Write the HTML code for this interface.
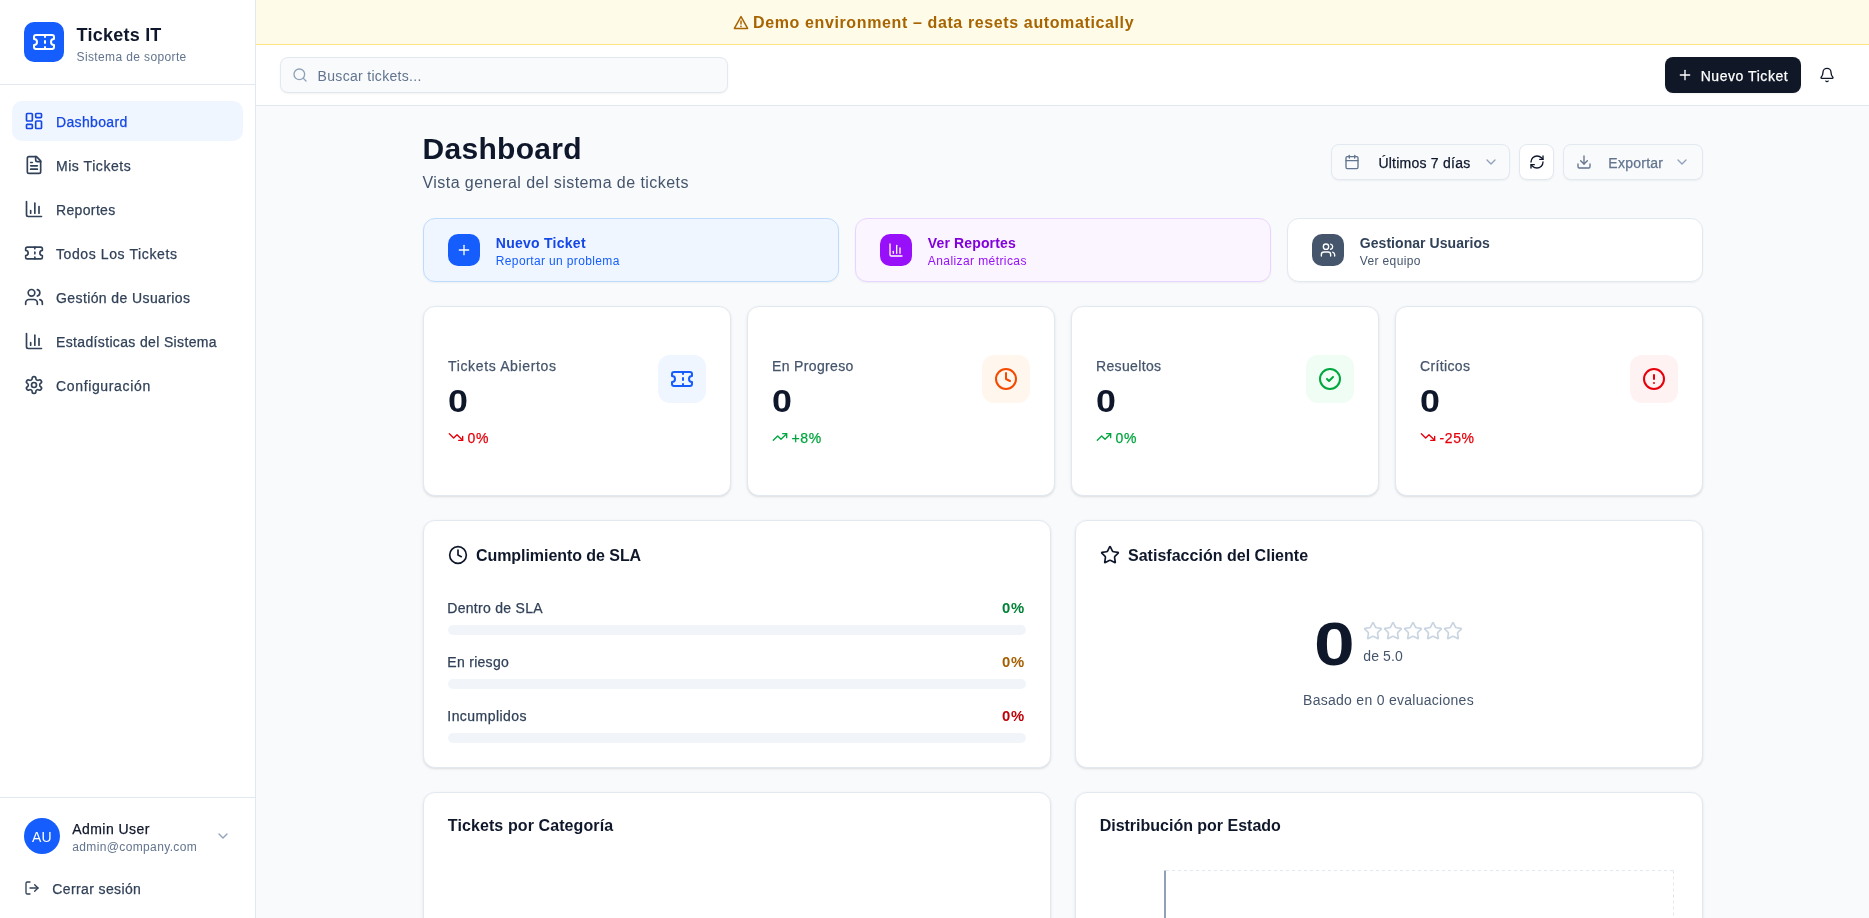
<!DOCTYPE html>
<html><head><meta charset="utf-8"><title>Dashboard</title>
<style>
html,body{margin:0;padding:0;}
body{width:1869px;height:918px;overflow:hidden;position:relative;background:#f8fafc;font-family:"Liberation Sans",sans-serif;}
#root{position:absolute;left:0;top:0;width:1869px;height:918px;will-change:transform;}
.a{position:absolute;box-sizing:border-box;}
.t{position:absolute;white-space:nowrap;line-height:1;}
svg.a{overflow:visible;}
</style></head><body>
<div id="root">
<div class="a" style="left:0px;top:0px;width:1869px;height:45px;background:#fefbe8;border-bottom:1px solid #fee685;"></div>
<svg class="a" style="left:733px;top:15px" width="16" height="15" viewBox="0 0 16 15"><path d="M8 1.6 L14.6 13.4 H1.4 Z" fill="none" stroke="#a86400" stroke-width="1.5" stroke-linejoin="round"/><path d="M8 5.4 V9.4" stroke="#a86400" stroke-width="1.5"/><circle cx="8" cy="11.3" r="0.85" fill="#a86400"/></svg>
<div class="t" style="left:753.0px;top:15.06px;font-size:16px;color:#a86400;font-weight:700;letter-spacing:0.62px;">Demo environment – data resets automatically</div>
<div class="a" style="left:0px;top:0px;width:256px;height:918px;background:#ffffff;border-right:1px solid #e2e8f0;"></div>
<div class="a" style="left:24px;top:22px;width:40px;height:40px;background:#155dfc;border-radius:10px;"></div>
<svg class="a" style="left:32px;top:30px" width="24" height="24" viewBox="0 0 24 24" fill="none" stroke="#ffffff" stroke-width="2" stroke-linecap="round" stroke-linejoin="round"><path d="M2 9a3 3 0 0 1 0 6v2a2 2 0 0 0 2 2h16a2 2 0 0 0 2-2v-2a3 3 0 0 1 0-6V7a2 2 0 0 0-2-2H4a2 2 0 0 0-2 2Z"/><path d="M13 5v2"/><path d="M13 17v2"/><path d="M13 11v2"/></svg>
<div class="t" style="left:76.6px;top:25.76px;font-size:18px;color:#0f172b;font-weight:700;letter-spacing:0.23px;">Tickets IT</div>
<div class="t" style="left:76.6px;top:50.84px;font-size:12px;color:#62748e;letter-spacing:0.37px;">Sistema de soporte</div>
<div class="a" style="left:0px;top:84px;width:255px;height:1px;background:#e2e8f0;"></div>
<div class="a" style="left:12px;top:101px;width:231px;height:40px;background:#eff6ff;border-radius:10px;"></div>
<svg class="a" style="left:24px;top:111px" width="20" height="20" viewBox="0 0 24 24" fill="none" stroke="#1447e6" stroke-width="2" stroke-linecap="round" stroke-linejoin="round"><rect width="7" height="9" x="3" y="3" rx="1"/><rect width="7" height="5" x="14" y="3" rx="1"/><rect width="7" height="9" x="14" y="12" rx="1"/><rect width="7" height="5" x="3" y="16" rx="1"/></svg>
<div class="t" style="left:56.0px;top:115.25px;font-size:14px;color:#1447e6;-webkit-text-stroke-width:0.25px;letter-spacing:0.35px;">Dashboard</div>
<svg class="a" style="left:24px;top:155px" width="20" height="20" viewBox="0 0 24 24" fill="none" stroke="#314158" stroke-width="2" stroke-linecap="round" stroke-linejoin="round"><path d="M15 2H6a2 2 0 0 0-2 2v16a2 2 0 0 0 2 2h12a2 2 0 0 0 2-2V7Z"/><path d="M14 2v4a2 2 0 0 0 2 2h4"/><path d="M10 9H8"/><path d="M16 13H8"/><path d="M16 17H8"/></svg>
<div class="t" style="left:56.0px;top:159.25px;font-size:14px;color:#314158;-webkit-text-stroke-width:0.25px;letter-spacing:0.55px;">Mis Tickets</div>
<svg class="a" style="left:24px;top:199px" width="20" height="20" viewBox="0 0 24 24" fill="none" stroke="#314158" stroke-width="2" stroke-linecap="round" stroke-linejoin="round"><path d="M3 3v16a2 2 0 0 0 2 2h16"/><path d="M18 17V9"/><path d="M13 17V5"/><path d="M8 17v-3"/></svg>
<div class="t" style="left:56.0px;top:203.25px;font-size:14px;color:#314158;-webkit-text-stroke-width:0.25px;letter-spacing:0.35px;">Reportes</div>
<svg class="a" style="left:24px;top:243px" width="20" height="20" viewBox="0 0 24 24" fill="none" stroke="#314158" stroke-width="2" stroke-linecap="round" stroke-linejoin="round"><path d="M2 9a3 3 0 0 1 0 6v2a2 2 0 0 0 2 2h16a2 2 0 0 0 2-2v-2a3 3 0 0 1 0-6V7a2 2 0 0 0-2-2H4a2 2 0 0 0-2 2Z"/><path d="M13 5v2"/><path d="M13 17v2"/><path d="M13 11v2"/></svg>
<div class="t" style="left:56.0px;top:247.25px;font-size:14px;color:#314158;-webkit-text-stroke-width:0.25px;letter-spacing:0.6px;">Todos Los Tickets</div>
<svg class="a" style="left:24px;top:287px" width="20" height="20" viewBox="0 0 24 24" fill="none" stroke="#314158" stroke-width="2" stroke-linecap="round" stroke-linejoin="round"><path d="M16 21v-2a4 4 0 0 0-4-4H6a4 4 0 0 0-4 4v2"/><circle cx="9" cy="7" r="4"/><path d="M22 21v-2a4 4 0 0 0-3-3.87"/><path d="M16 3.13a4 4 0 0 1 0 7.75"/></svg>
<div class="t" style="left:56.0px;top:291.25px;font-size:14px;color:#314158;-webkit-text-stroke-width:0.25px;letter-spacing:0.4px;">Gestión de Usuarios</div>
<svg class="a" style="left:24px;top:331px" width="20" height="20" viewBox="0 0 24 24" fill="none" stroke="#314158" stroke-width="2" stroke-linecap="round" stroke-linejoin="round"><path d="M3 3v16a2 2 0 0 0 2 2h16"/><path d="M18 17V9"/><path d="M13 17V5"/><path d="M8 17v-3"/></svg>
<div class="t" style="left:56.0px;top:335.25px;font-size:14px;color:#314158;-webkit-text-stroke-width:0.25px;letter-spacing:0.35px;">Estadísticas del Sistema</div>
<svg class="a" style="left:24px;top:375px" width="20" height="20" viewBox="0 0 24 24" fill="none" stroke="#314158" stroke-width="2" stroke-linecap="round" stroke-linejoin="round"><path d="M12.22 2h-.44a2 2 0 0 0-2 2v.18a2 2 0 0 1-1 1.73l-.43.25a2 2 0 0 1-2 0l-.15-.08a2 2 0 0 0-2.73.73l-.22.38a2 2 0 0 0 .73 2.73l.15.1a2 2 0 0 1 1 1.72v.51a2 2 0 0 1-1 1.74l-.15.09a2 2 0 0 0-.73 2.73l.22.38a2 2 0 0 0 2.73.73l.15-.08a2 2 0 0 1 2 0l.43.25a2 2 0 0 1 1 1.73V20a2 2 0 0 0 2 2h.44a2 2 0 0 0 2-2v-.18a2 2 0 0 1 1-1.73l.43-.25a2 2 0 0 1 2 0l.15.08a2 2 0 0 0 2.73-.73l.22-.39a2 2 0 0 0-.73-2.73l-.15-.08a2 2 0 0 1-1-1.74v-.5a2 2 0 0 1 1-1.74l.15-.09a2 2 0 0 0 .73-2.73l-.22-.38a2 2 0 0 0-2.73-.73l-.15.08a2 2 0 0 1-2 0l-.43-.25a2 2 0 0 1-1-1.73V4a2 2 0 0 0-2-2z"/><circle cx="12" cy="12" r="3"/></svg>
<div class="t" style="left:56.0px;top:379.25px;font-size:14px;color:#314158;-webkit-text-stroke-width:0.25px;letter-spacing:0.65px;">Configuración</div>
<div class="a" style="left:0px;top:797px;width:255px;height:1px;background:#e2e8f0;"></div>
<div class="a" style="left:24px;top:818px;width:36px;height:36px;background:#155dfc;border-radius:50%;"></div>
<div class="t" style="left:24px;top:819px;width:36px;height:36px;display:flex;align-items:center;justify-content:center;font-size:14px;color:#fff;letter-spacing:0.2px">AU</div>
<div class="t" style="left:72.2px;top:822.15px;font-size:14px;color:#0f172b;-webkit-text-stroke-width:0.25px;letter-spacing:0.46px;">Admin User</div>
<div class="t" style="left:72.2px;top:841.14px;font-size:12px;color:#62748e;letter-spacing:0.37px;">admin@company.com</div>
<svg class="a" style="left:215px;top:828px" width="16" height="16" viewBox="0 0 24 24" fill="none" stroke="#90a1b9" stroke-width="2" stroke-linecap="round" stroke-linejoin="round"><path d="m6 9 6 6 6-6"/></svg>
<svg class="a" style="left:24px;top:880px" width="16" height="16" viewBox="0 0 24 24" fill="none" stroke="#314158" stroke-width="2" stroke-linecap="round" stroke-linejoin="round"><path d="M9 21H5a2 2 0 0 1-2-2V5a2 2 0 0 1 2-2h4"/><polyline points="16 17 21 12 16 7"/><line x1="21" x2="9" y1="12" y2="12"/></svg>
<div class="t" style="left:52.3px;top:882.15px;font-size:14px;color:#314158;-webkit-text-stroke-width:0.25px;letter-spacing:0.38px;">Cerrar sesión</div>
<div class="a" style="left:256px;top:45px;width:1613px;height:61px;background:#ffffff;border-bottom:1px solid #e2e8f0;"></div>
<div class="a" style="left:280px;top:57px;width:448px;height:36px;background:#f8fafc;border:1px solid #e2e8f0;border-radius:8px;box-shadow:0 1px 2px rgba(0,0,0,0.05);"></div>
<svg class="a" style="left:292px;top:67px" width="16" height="16" viewBox="0 0 24 24" fill="none" stroke="#90a1b9" stroke-width="2" stroke-linecap="round" stroke-linejoin="round"><circle cx="11" cy="11" r="8"/><path d="m21 21-4.3-4.3"/></svg>
<div class="t" style="left:317.6px;top:69.15px;font-size:14px;color:#62748e;letter-spacing:0.31px;">Buscar tickets...</div>
<div class="a" style="left:1665px;top:57px;width:136px;height:36px;background:#101828;border-radius:8px;box-shadow:0 1px 2px rgba(0,0,0,0.05);"></div>
<svg class="a" style="left:1677.3px;top:67px" width="16" height="16" viewBox="0 0 24 24" fill="none" stroke="#ffffff" stroke-width="2" stroke-linecap="round" stroke-linejoin="round"><path d="M5 12h14"/><path d="M12 5v14"/></svg>
<div class="t" style="left:1700.7px;top:69.15px;font-size:14px;color:#ffffff;-webkit-text-stroke-width:0.25px;letter-spacing:0.55px;">Nuevo Ticket</div>
<svg class="a" style="left:1819px;top:67px" width="16" height="16" viewBox="0 0 24 24" fill="none" stroke="#0f172b" stroke-width="2" stroke-linecap="round" stroke-linejoin="round"><path d="M10.268 21a2 2 0 0 0 3.464 0"/><path d="M3.262 15.326A1 1 0 0 0 4 17h16a1 1 0 0 0 .74-1.673C19.41 13.956 18 12.499 18 8A6 6 0 0 0 6 8c0 4.499-1.411 5.956-2.738 7.326"/></svg>
<div class="t" style="left:422.5px;top:134.11px;font-size:30px;color:#0f172b;font-weight:700;letter-spacing:0.31px;">Dashboard</div>
<div class="t" style="left:422.5px;top:175.46px;font-size:16px;color:#45556c;letter-spacing:0.44px;">Vista general del sistema de tickets</div>
<div class="a" style="left:1331px;top:144px;width:179px;height:36px;background:#f8fafc;border:1px solid #e2e8f0;border-radius:8px;box-shadow:0 1px 2px rgba(0,0,0,0.05);"></div>
<svg class="a" style="left:1344px;top:154px" width="16" height="16" viewBox="0 0 24 24" fill="none" stroke="#62748e" stroke-width="2" stroke-linecap="round" stroke-linejoin="round"><path d="M8 2v4"/><path d="M16 2v4"/><rect width="18" height="18" x="3" y="4" rx="2"/><path d="M3 10h18"/></svg>
<div class="t" style="left:1378.4px;top:156.15px;font-size:14px;color:#0f172b;-webkit-text-stroke-width:0.25px;letter-spacing:0.24px;">Últimos 7 días</div>
<svg class="a" style="left:1482.5px;top:154px" width="16" height="16" viewBox="0 0 24 24" fill="none" stroke="#90a1b9" stroke-width="2" stroke-linecap="round" stroke-linejoin="round"><path d="m6 9 6 6 6-6"/></svg>
<div class="a" style="left:1519px;top:144px;width:35px;height:36px;background:#ffffff;border:1px solid #e2e8f0;border-radius:8px;box-shadow:0 1px 2px rgba(0,0,0,0.05);"></div>
<svg class="a" style="left:1528.5px;top:154px" width="16" height="16" viewBox="0 0 24 24" fill="none" stroke="#0f172b" stroke-width="2" stroke-linecap="round" stroke-linejoin="round"><path d="M3 12a9 9 0 0 1 9-9 9.75 9.75 0 0 1 6.74 2.74L21 8"/><path d="M21 3v5h-5"/><path d="M21 12a9 9 0 0 1-9 9 9.75 9.75 0 0 1-6.74-2.74L3 16"/><path d="M8 16H3v5"/></svg>
<div class="a" style="left:1563px;top:144px;width:140px;height:36px;background:#f8fafc;border:1px solid #e2e8f0;border-radius:8px;box-shadow:0 1px 2px rgba(0,0,0,0.05);"></div>
<svg class="a" style="left:1576px;top:154px" width="16" height="16" viewBox="0 0 24 24" fill="none" stroke="#62748e" stroke-width="2" stroke-linecap="round" stroke-linejoin="round"><path d="M21 15v4a2 2 0 0 1-2 2H5a2 2 0 0 1-2-2v-4"/><polyline points="7 10 12 15 17 10"/><line x1="12" x2="12" y1="15" y2="3"/></svg>
<div class="t" style="left:1608.3px;top:156.15px;font-size:14px;color:#62748e;-webkit-text-stroke-width:0.25px;letter-spacing:0.26px;">Exportar</div>
<svg class="a" style="left:1673.5px;top:154px" width="16" height="16" viewBox="0 0 24 24" fill="none" stroke="#90a1b9" stroke-width="2" stroke-linecap="round" stroke-linejoin="round"><path d="m6 9 6 6 6-6"/></svg>
<div class="a" style="left:423px;top:218px;width:416px;height:64px;background:#eff6ff;border:1px solid #bedbff;border-radius:12px;box-shadow:0 1px 2px rgba(0,0,0,0.05);"></div>
<div class="a" style="left:448px;top:234px;width:32px;height:32px;background:#155dfc;border-radius:10px;"></div>
<svg class="a" style="left:456px;top:242px" width="16" height="16" viewBox="0 0 24 24" fill="none" stroke="#ffffff" stroke-width="2" stroke-linecap="round" stroke-linejoin="round"><path d="M5 12h14"/><path d="M12 5v14"/></svg>
<div class="t" style="left:495.8px;top:236.15px;font-size:14px;color:#1447e6;font-weight:700;letter-spacing:0.26px;">Nuevo Ticket</div>
<div class="t" style="left:495.8px;top:254.84px;font-size:12px;color:#155dfc;letter-spacing:0.36px;">Reportar un problema</div>
<div class="a" style="left:855px;top:218px;width:416px;height:64px;background:#faf5ff;border:1px solid #e9d4ff;border-radius:12px;box-shadow:0 1px 2px rgba(0,0,0,0.05);"></div>
<div class="a" style="left:880px;top:234px;width:32px;height:32px;background:#9810fa;border-radius:10px;"></div>
<svg class="a" style="left:888px;top:242px" width="16" height="16" viewBox="0 0 24 24" fill="none" stroke="#ffffff" stroke-width="2" stroke-linecap="round" stroke-linejoin="round"><path d="M3 3v16a2 2 0 0 0 2 2h16"/><path d="M18 17V9"/><path d="M13 17V5"/><path d="M8 17v-3"/></svg>
<div class="t" style="left:927.8px;top:236.15px;font-size:14px;color:#8200db;font-weight:700;letter-spacing:0.14px;">Ver Reportes</div>
<div class="t" style="left:927.8px;top:254.84px;font-size:12px;color:#9810fa;letter-spacing:0.41px;">Analizar métricas</div>
<div class="a" style="left:1287px;top:218px;width:416px;height:64px;background:#ffffff;border:1px solid #e2e8f0;border-radius:12px;box-shadow:0 1px 2px rgba(0,0,0,0.05);"></div>
<div class="a" style="left:1312px;top:234px;width:32px;height:32px;background:#45556c;border-radius:10px;"></div>
<svg class="a" style="left:1320px;top:242px" width="16" height="16" viewBox="0 0 24 24" fill="none" stroke="#ffffff" stroke-width="2" stroke-linecap="round" stroke-linejoin="round"><path d="M16 21v-2a4 4 0 0 0-4-4H6a4 4 0 0 0-4 4v2"/><circle cx="9" cy="7" r="4"/><path d="M22 21v-2a4 4 0 0 0-3-3.87"/><path d="M16 3.13a4 4 0 0 1 0 7.75"/></svg>
<div class="t" style="left:1359.8px;top:236.15px;font-size:14px;color:#314158;font-weight:700;letter-spacing:0.05px;">Gestionar Usuarios</div>
<div class="t" style="left:1359.8px;top:254.84px;font-size:12px;color:#45556c;letter-spacing:0.36px;">Ver equipo</div>
<div class="a" style="left:423px;top:306px;width:308px;height:190px;background:#ffffff;border:1px solid #e2e8f0;border-radius:12px;box-shadow:0 1px 3px rgba(0,0,0,0.1),0 1px 2px -1px rgba(0,0,0,0.1);"></div>
<div class="t" style="left:448.0px;top:358.95px;font-size:14px;color:#45556c;-webkit-text-stroke-width:0.25px;letter-spacing:0.65px;">Tickets Abiertos</div>
<div class="t" style="left:447.5px;top:385.32px;font-size:32px;color:#0f172b;font-weight:700;letter-spacing:0px;transform:scaleX(1.12);transform-origin:0 0;">0</div>
<svg class="a" style="left:448px;top:429px" width="16" height="16" viewBox="0 0 24 24" fill="none" stroke="#e7000b" stroke-width="2" stroke-linecap="round" stroke-linejoin="round"><polyline points="22 17 13.5 8.5 8.5 13.5 2 7"/><polyline points="16 17 22 17 22 11"/></svg>
<div class="t" style="left:467.5px;top:431.15px;font-size:14px;color:#e7000b;-webkit-text-stroke-width:0.25px;letter-spacing:0.6px;">0%</div>
<div class="a" style="left:658px;top:355px;width:48px;height:48px;background:#eff6ff;border-radius:12px;"></div>
<svg class="a" style="left:670px;top:367px" width="24" height="24" viewBox="0 0 24 24" fill="none" stroke="#155dfc" stroke-width="2" stroke-linecap="round" stroke-linejoin="round"><path d="M2 9a3 3 0 0 1 0 6v2a2 2 0 0 0 2 2h16a2 2 0 0 0 2-2v-2a3 3 0 0 1 0-6V7a2 2 0 0 0-2-2H4a2 2 0 0 0-2 2Z"/><path d="M13 5v2"/><path d="M13 17v2"/><path d="M13 11v2"/></svg>
<div class="a" style="left:747px;top:306px;width:308px;height:190px;background:#ffffff;border:1px solid #e2e8f0;border-radius:12px;box-shadow:0 1px 3px rgba(0,0,0,0.1),0 1px 2px -1px rgba(0,0,0,0.1);"></div>
<div class="t" style="left:772.0px;top:358.95px;font-size:14px;color:#45556c;-webkit-text-stroke-width:0.25px;letter-spacing:0.35px;">En Progreso</div>
<div class="t" style="left:771.5px;top:385.32px;font-size:32px;color:#0f172b;font-weight:700;letter-spacing:0px;transform:scaleX(1.12);transform-origin:0 0;">0</div>
<svg class="a" style="left:772px;top:429px" width="16" height="16" viewBox="0 0 24 24" fill="none" stroke="#00a63e" stroke-width="2" stroke-linecap="round" stroke-linejoin="round"><polyline points="22 7 13.5 15.5 8.5 10.5 2 17"/><polyline points="16 7 22 7 22 13"/></svg>
<div class="t" style="left:791.5px;top:431.15px;font-size:14px;color:#00a63e;-webkit-text-stroke-width:0.25px;letter-spacing:0.6px;">+8%</div>
<div class="a" style="left:982px;top:355px;width:48px;height:48px;background:#fff7ed;border-radius:12px;"></div>
<svg class="a" style="left:994px;top:367px" width="24" height="24" viewBox="0 0 24 24" fill="none" stroke="#f54900" stroke-width="2" stroke-linecap="round" stroke-linejoin="round"><circle cx="12" cy="12" r="10"/><polyline points="12 6 12 12 16 14"/></svg>
<div class="a" style="left:1071px;top:306px;width:308px;height:190px;background:#ffffff;border:1px solid #e2e8f0;border-radius:12px;box-shadow:0 1px 3px rgba(0,0,0,0.1),0 1px 2px -1px rgba(0,0,0,0.1);"></div>
<div class="t" style="left:1096.0px;top:358.95px;font-size:14px;color:#45556c;-webkit-text-stroke-width:0.25px;letter-spacing:0.35px;">Resueltos</div>
<div class="t" style="left:1095.5px;top:385.32px;font-size:32px;color:#0f172b;font-weight:700;letter-spacing:0px;transform:scaleX(1.12);transform-origin:0 0;">0</div>
<svg class="a" style="left:1096px;top:429px" width="16" height="16" viewBox="0 0 24 24" fill="none" stroke="#00a63e" stroke-width="2" stroke-linecap="round" stroke-linejoin="round"><polyline points="22 7 13.5 15.5 8.5 10.5 2 17"/><polyline points="16 7 22 7 22 13"/></svg>
<div class="t" style="left:1115.5px;top:431.15px;font-size:14px;color:#00a63e;-webkit-text-stroke-width:0.25px;letter-spacing:0.6px;">0%</div>
<div class="a" style="left:1306px;top:355px;width:48px;height:48px;background:#f0fdf4;border-radius:12px;"></div>
<svg class="a" style="left:1318px;top:367px" width="24" height="24" viewBox="0 0 24 24" fill="none" stroke="#00a63e" stroke-width="2" stroke-linecap="round" stroke-linejoin="round"><circle cx="12" cy="12" r="10"/><path d="m9 12 2 2 4-4"/></svg>
<div class="a" style="left:1395px;top:306px;width:308px;height:190px;background:#ffffff;border:1px solid #e2e8f0;border-radius:12px;box-shadow:0 1px 3px rgba(0,0,0,0.1),0 1px 2px -1px rgba(0,0,0,0.1);"></div>
<div class="t" style="left:1420.0px;top:358.95px;font-size:14px;color:#45556c;-webkit-text-stroke-width:0.25px;letter-spacing:0.35px;">Críticos</div>
<div class="t" style="left:1419.5px;top:385.32px;font-size:32px;color:#0f172b;font-weight:700;letter-spacing:0px;transform:scaleX(1.12);transform-origin:0 0;">0</div>
<svg class="a" style="left:1420px;top:429px" width="16" height="16" viewBox="0 0 24 24" fill="none" stroke="#e7000b" stroke-width="2" stroke-linecap="round" stroke-linejoin="round"><polyline points="22 17 13.5 8.5 8.5 13.5 2 7"/><polyline points="16 17 22 17 22 11"/></svg>
<div class="t" style="left:1439.5px;top:431.15px;font-size:14px;color:#e7000b;-webkit-text-stroke-width:0.25px;letter-spacing:0.6px;">-25%</div>
<div class="a" style="left:1630px;top:355px;width:48px;height:48px;background:#fef2f2;border-radius:12px;"></div>
<svg class="a" style="left:1642px;top:367px" width="24" height="24" viewBox="0 0 24 24" fill="none" stroke="#e7000b" stroke-width="2" stroke-linecap="round" stroke-linejoin="round"><circle cx="12" cy="12" r="10"/><line x1="12" x2="12" y1="8" y2="12"/><line x1="12" x2="12.01" y1="16" y2="16"/></svg>
<div class="a" style="left:423px;top:520px;width:628px;height:248px;background:#ffffff;border:1px solid #e2e8f0;border-radius:12px;box-shadow:0 1px 3px rgba(0,0,0,0.1),0 1px 2px -1px rgba(0,0,0,0.1);"></div>
<svg class="a" style="left:448px;top:545px" width="20" height="20" viewBox="0 0 24 24" fill="none" stroke="#0f172b" stroke-width="2" stroke-linecap="round" stroke-linejoin="round"><circle cx="12" cy="12" r="10"/><polyline points="12 6 12 12 16 14"/></svg>
<div class="t" style="left:476.0px;top:547.76px;font-size:16px;color:#0f172b;font-weight:700;letter-spacing:-0.06px;">Cumplimiento de SLA</div>
<div class="t" style="left:447.3px;top:601.15px;font-size:14px;color:#314158;-webkit-text-stroke-width:0.25px;letter-spacing:0.29px;">Dentro de SLA</div>
<div class="t" style="left:1002.0px;top:601.15px;font-size:14px;color:#008236;font-weight:700;letter-spacing:0.8px;transform:scaleX(1.06);transform-origin:0 0;">0%</div>
<div class="a" style="left:448px;top:625px;width:578px;height:10px;background:#f1f5f9;border-radius:9999px;"></div>
<div class="t" style="left:447.3px;top:655.15px;font-size:14px;color:#314158;-webkit-text-stroke-width:0.25px;letter-spacing:0.29px;">En riesgo</div>
<div class="t" style="left:1002.0px;top:655.15px;font-size:14px;color:#a65f00;font-weight:700;letter-spacing:0.8px;transform:scaleX(1.06);transform-origin:0 0;">0%</div>
<div class="a" style="left:448px;top:679px;width:578px;height:10px;background:#f1f5f9;border-radius:9999px;"></div>
<div class="t" style="left:447.3px;top:709.15px;font-size:14px;color:#314158;-webkit-text-stroke-width:0.25px;letter-spacing:0.45px;">Incumplidos</div>
<div class="t" style="left:1002.0px;top:709.15px;font-size:14px;color:#c10007;font-weight:700;letter-spacing:0.8px;transform:scaleX(1.06);transform-origin:0 0;">0%</div>
<div class="a" style="left:448px;top:733px;width:578px;height:10px;background:#f1f5f9;border-radius:9999px;"></div>
<div class="a" style="left:1075px;top:520px;width:628px;height:248px;background:#ffffff;border:1px solid #e2e8f0;border-radius:12px;box-shadow:0 1px 3px rgba(0,0,0,0.1),0 1px 2px -1px rgba(0,0,0,0.1);"></div>
<svg class="a" style="left:1100px;top:545px" width="20" height="20" viewBox="0 0 24 24" fill="none" stroke="#0f172b" stroke-width="2" stroke-linecap="round" stroke-linejoin="round"><path d="M11.525 2.295a.53.53 0 0 1 .95 0l2.31 4.679a2.123 2.123 0 0 0 1.595 1.16l5.166.756a.53.53 0 0 1 .294.904l-3.736 3.638a2.123 2.123 0 0 0-.611 1.878l.882 5.14a.53.53 0 0 1-.771.56l-4.618-2.428a2.122 2.122 0 0 0-1.973 0L6.396 21.01a.53.53 0 0 1-.77-.56l.881-5.139a2.122 2.122 0 0 0-.611-1.879L2.16 9.795a.53.53 0 0 1 .294-.906l5.165-.755a2.122 2.122 0 0 0 1.597-1.16z"/></svg>
<div class="t" style="left:1128.0px;top:547.56px;font-size:16px;color:#0f172b;font-weight:700;letter-spacing:0.02px;">Satisfacción del Cliente</div>
<div class="t" style="left:1313.5px;top:612.52px;font-size:62px;color:#0f172b;font-weight:700;letter-spacing:0px;transform:scaleX(1.18);transform-origin:0 0;">0</div>
<svg class="a" style="left:1363px;top:620.5px" width="20" height="20" viewBox="0 0 24 24" fill="none" stroke="#cad5e2" stroke-width="2" stroke-linecap="round" stroke-linejoin="round"><path d="M11.525 2.295a.53.53 0 0 1 .95 0l2.31 4.679a2.123 2.123 0 0 0 1.595 1.16l5.166.756a.53.53 0 0 1 .294.904l-3.736 3.638a2.123 2.123 0 0 0-.611 1.878l.882 5.14a.53.53 0 0 1-.771.56l-4.618-2.428a2.122 2.122 0 0 0-1.973 0L6.396 21.01a.53.53 0 0 1-.77-.56l.881-5.139a2.122 2.122 0 0 0-.611-1.879L2.16 9.795a.53.53 0 0 1 .294-.906l5.165-.755a2.122 2.122 0 0 0 1.597-1.16z"/></svg>
<svg class="a" style="left:1383px;top:620.5px" width="20" height="20" viewBox="0 0 24 24" fill="none" stroke="#cad5e2" stroke-width="2" stroke-linecap="round" stroke-linejoin="round"><path d="M11.525 2.295a.53.53 0 0 1 .95 0l2.31 4.679a2.123 2.123 0 0 0 1.595 1.16l5.166.756a.53.53 0 0 1 .294.904l-3.736 3.638a2.123 2.123 0 0 0-.611 1.878l.882 5.14a.53.53 0 0 1-.771.56l-4.618-2.428a2.122 2.122 0 0 0-1.973 0L6.396 21.01a.53.53 0 0 1-.77-.56l.881-5.139a2.122 2.122 0 0 0-.611-1.879L2.16 9.795a.53.53 0 0 1 .294-.906l5.165-.755a2.122 2.122 0 0 0 1.597-1.16z"/></svg>
<svg class="a" style="left:1403px;top:620.5px" width="20" height="20" viewBox="0 0 24 24" fill="none" stroke="#cad5e2" stroke-width="2" stroke-linecap="round" stroke-linejoin="round"><path d="M11.525 2.295a.53.53 0 0 1 .95 0l2.31 4.679a2.123 2.123 0 0 0 1.595 1.16l5.166.756a.53.53 0 0 1 .294.904l-3.736 3.638a2.123 2.123 0 0 0-.611 1.878l.882 5.14a.53.53 0 0 1-.771.56l-4.618-2.428a2.122 2.122 0 0 0-1.973 0L6.396 21.01a.53.53 0 0 1-.77-.56l.881-5.139a2.122 2.122 0 0 0-.611-1.879L2.16 9.795a.53.53 0 0 1 .294-.906l5.165-.755a2.122 2.122 0 0 0 1.597-1.16z"/></svg>
<svg class="a" style="left:1423px;top:620.5px" width="20" height="20" viewBox="0 0 24 24" fill="none" stroke="#cad5e2" stroke-width="2" stroke-linecap="round" stroke-linejoin="round"><path d="M11.525 2.295a.53.53 0 0 1 .95 0l2.31 4.679a2.123 2.123 0 0 0 1.595 1.16l5.166.756a.53.53 0 0 1 .294.904l-3.736 3.638a2.123 2.123 0 0 0-.611 1.878l.882 5.14a.53.53 0 0 1-.771.56l-4.618-2.428a2.122 2.122 0 0 0-1.973 0L6.396 21.01a.53.53 0 0 1-.77-.56l.881-5.139a2.122 2.122 0 0 0-.611-1.879L2.16 9.795a.53.53 0 0 1 .294-.906l5.165-.755a2.122 2.122 0 0 0 1.597-1.16z"/></svg>
<svg class="a" style="left:1443px;top:620.5px" width="20" height="20" viewBox="0 0 24 24" fill="none" stroke="#cad5e2" stroke-width="2" stroke-linecap="round" stroke-linejoin="round"><path d="M11.525 2.295a.53.53 0 0 1 .95 0l2.31 4.679a2.123 2.123 0 0 0 1.595 1.16l5.166.756a.53.53 0 0 1 .294.904l-3.736 3.638a2.123 2.123 0 0 0-.611 1.878l.882 5.14a.53.53 0 0 1-.771.56l-4.618-2.428a2.122 2.122 0 0 0-1.973 0L6.396 21.01a.53.53 0 0 1-.77-.56l.881-5.139a2.122 2.122 0 0 0-.611-1.879L2.16 9.795a.53.53 0 0 1 .294-.906l5.165-.755a2.122 2.122 0 0 0 1.597-1.16z"/></svg>
<div class="t" style="left:1363.3px;top:648.95px;font-size:14px;color:#45556c;letter-spacing:0.11px;">de 5.0</div>
<div class="t" style="left:888.5px;width:1000px;text-align:center;top:692.95px;font-size:14px;color:#45556c;letter-spacing:0.28px;">Basado en 0 evaluaciones</div>
<div class="a" style="left:423px;top:792px;width:628px;height:200px;background:#ffffff;border:1px solid #e2e8f0;border-radius:12px;box-shadow:0 1px 3px rgba(0,0,0,0.1),0 1px 2px -1px rgba(0,0,0,0.1);"></div>
<div class="t" style="left:447.8px;top:818.46px;font-size:16px;color:#0f172b;font-weight:700;letter-spacing:0.1px;">Tickets por Categoría</div>
<div class="a" style="left:1075px;top:792px;width:628px;height:200px;background:#ffffff;border:1px solid #e2e8f0;border-radius:12px;box-shadow:0 1px 3px rgba(0,0,0,0.1),0 1px 2px -1px rgba(0,0,0,0.1);"></div>
<div class="t" style="left:1099.7px;top:818.46px;font-size:16px;color:#0f172b;font-weight:700;letter-spacing:-0.01px;">Distribución por Estado</div>
<svg class="a" style="left:1164px;top:869px" width="512" height="52"><line x1="2" y1="1.5" x2="509.5" y2="1.5" stroke="#e2e8f0" stroke-width="1" stroke-dasharray="3 3"/><line x1="509.5" y1="1.5" x2="509.5" y2="52" stroke="#e2e8f0" stroke-width="1" stroke-dasharray="3 3"/><line x1="1" y1="1.5" x2="1" y2="52" stroke="#90a1b9" stroke-width="2"/></svg>
</div></body></html>
